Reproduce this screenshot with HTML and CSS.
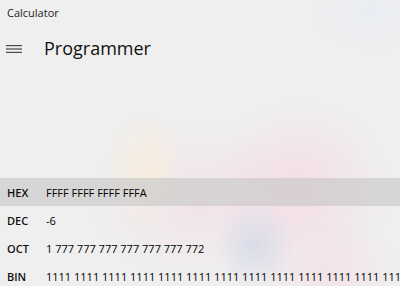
FILE: index.html
```html
<!DOCTYPE html>
<html>
<head>
<meta charset="utf-8">
<link rel="stylesheet" href="styles.css">
</head>
<body>
<div class="app">
  <div class="titlebar">Calculator</div>
  <div class="header">
    <svg class="hamburger" width="16" height="8" viewBox="0 0 16 8">
      <rect x="0" y="0" width="16" height="1.2" fill="#4a4a4a"/>
      <rect x="0" y="3.4" width="16" height="1.2" fill="#4a4a4a"/>
      <rect x="0" y="6.8" width="16" height="1.2" fill="#4a4a4a"/>
    </svg>
    <div class="title">Programmer</div>
  </div>
  <div class="spacer"></div>
  <div class="radix">
    <div class="row active"><span class="label">HEX</span><span class="value">FFFF FFFF FFFF FFFA</span></div>
    <div class="row"><span class="label">DEC</span><span class="value">-6</span></div>
    <div class="row"><span class="label">OCT</span><span class="value">1 777 777 777 777 777 777 772</span></div>
    <div class="row"><span class="label">BIN</span><span class="value">1111 1111 1111 1111 1111 1111 1111 1111 1111 1111 1111 1111 1111 1111 1111 1010</span></div>
  </div>
</div>
</body>
</html>
```
FILE: styles.css
```css
html, body {
  margin: 0;
  padding: 0;
  width: 400px;
  height: 286px;
  overflow: hidden;
}
body {
  font-family: "Open Sans", "Noto Sans", sans-serif;
  color: #111;
  background:
    radial-gradient(ellipse 40px 60px at 145px 170px, rgba(249, 238, 220, 0.85), rgba(249, 238, 220, 0) 100%),
    radial-gradient(ellipse 40px 45px at 255px 245px, rgba(214, 218, 232, 0.9), rgba(214, 218, 232, 0) 100%),
    radial-gradient(ellipse 90px 90px at 300px 190px, rgba(245, 218, 228, 0.85), rgba(245, 218, 228, 0) 100%),
    radial-gradient(ellipse 110px 80px at 200px 200px, rgba(242, 224, 230, 0.8), rgba(242, 224, 230, 0) 100%),
    radial-gradient(ellipse 70px 60px at 330px 275px, rgba(244, 222, 232, 0.7), rgba(244, 222, 232, 0) 100%),
    radial-gradient(ellipse 60px 40px at 370px 10px, rgba(232, 236, 244, 0.8), rgba(232, 236, 244, 0) 100%),
    #efefef;
}
.app {
  display: flex;
  flex-direction: column;
  height: 286px;
}
.app > * {
  flex: none;
}
.titlebar {
  font-size: 11px;
  padding: 5px 0 0 7px;
  height: 25px;
  box-sizing: border-box;
  color: #222;
}
.header {
  display: flex;
  align-items: center;
  height: 46px;
  padding-left: 6px;
}
.hamburger {
  flex: none;
  margin-top: 1px;
}
.title {
  font-size: 18px;
  margin-left: 22px;
  color: #111;
}
.spacer {
  height: 107px;
}
.radix {
  display: flex;
  flex-direction: column;
}
.row {
  display: flex;
  align-items: center;
  height: 28px;
  flex: none;
  white-space: nowrap;
  font-size: 11px;
  overflow: hidden;
}
.row.active {
  background: rgba(198, 198, 198, 0.62);
}
.label {
  width: 39px;
  padding-left: 7px;
  font-weight: 600;
  flex: none;
}
.value {
  font-weight: 500;
  color: #000;
}
```
